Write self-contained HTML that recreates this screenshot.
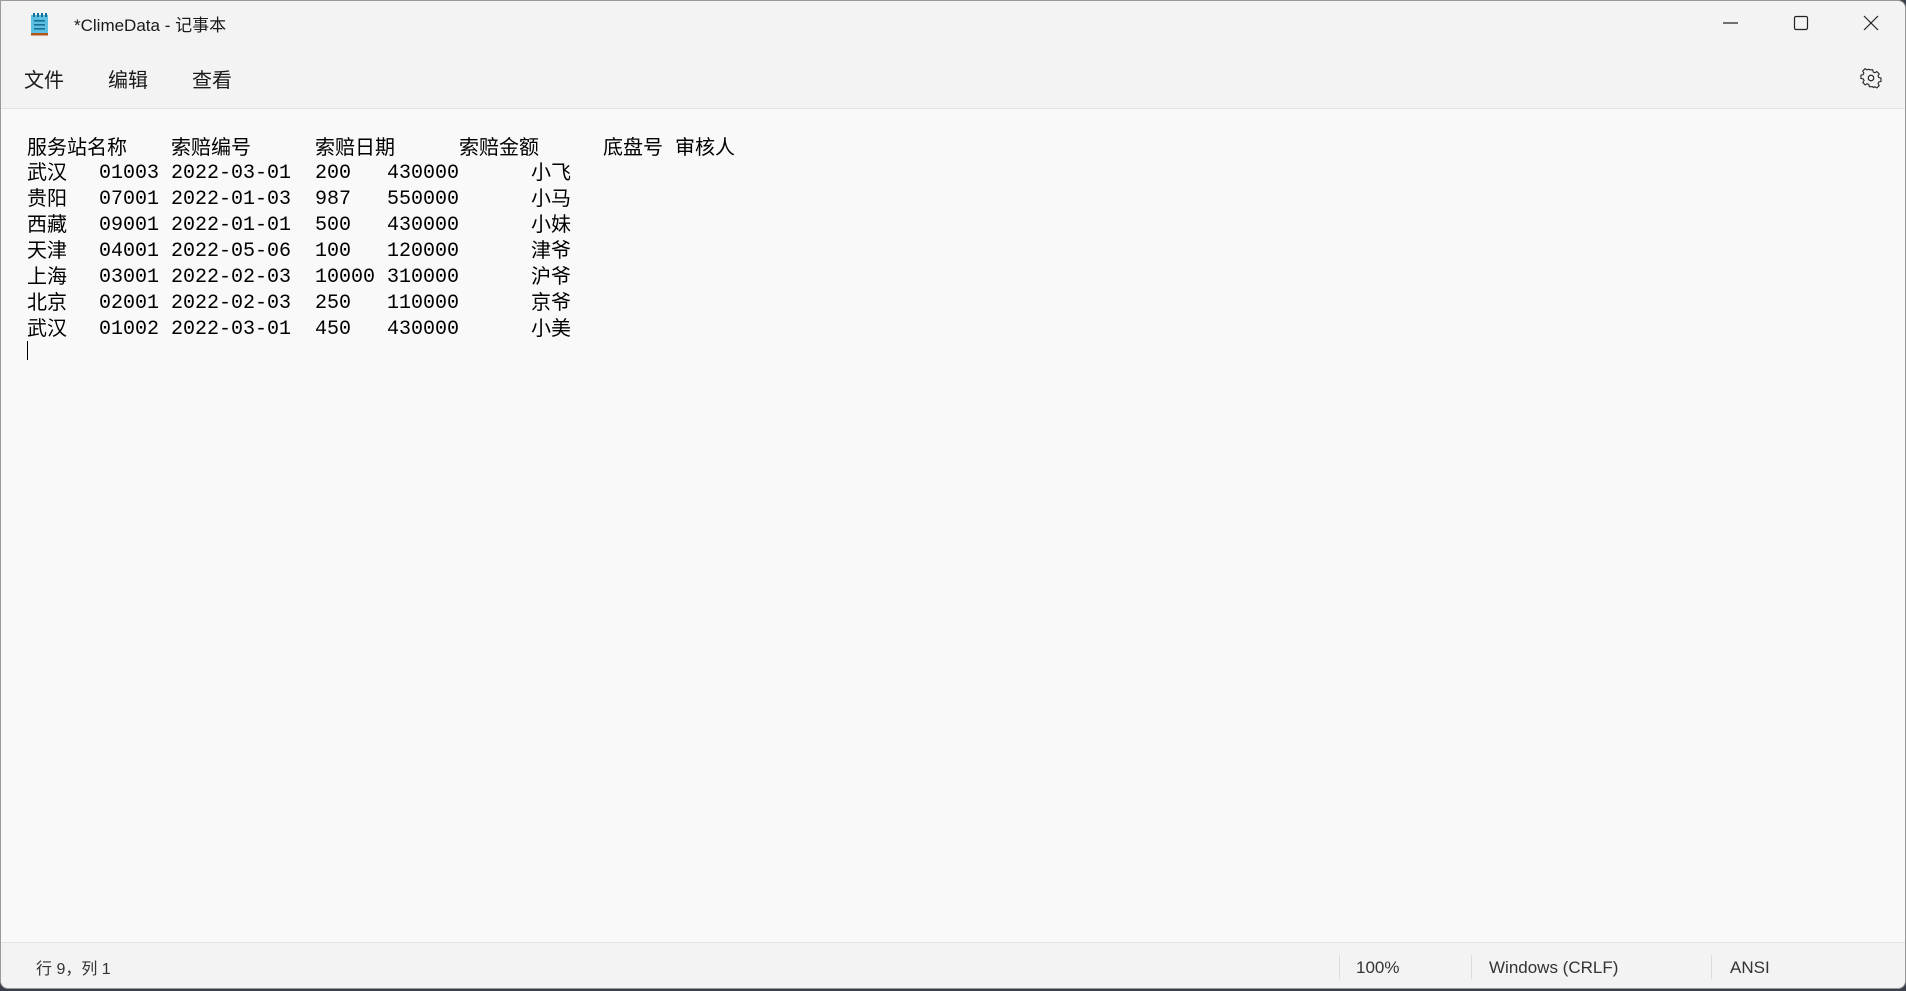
<!DOCTYPE html>
<html><head><meta charset="utf-8"><style>
*{margin:0;padding:0;box-sizing:border-box}
html,body{width:1906px;height:991px;overflow:hidden;background:#3a3f4a}
#win{position:absolute;left:0;top:0;width:1906px;height:989px;background:#f3f3f3;border:1px solid #9a9a9a;border-radius:0 8px 8px 8px;overflow:hidden;font-family:"Liberation Sans","Noto Sans CJK SC",sans-serif;color:#1a1a1a}
.t{position:absolute;white-space:nowrap}
#edit{position:absolute;left:0;top:107px;width:1906px;height:835px;background:#f9f9f9;border-top:1px solid #e3e3e3;border-bottom:1px solid #e3e3e3}
.c{position:absolute;font-size:20px;line-height:26px;white-space:nowrap;font-family:"Liberation Mono","Noto Sans CJK SC",monospace;color:#000}
.cj{font-family:"Noto Sans CJK SC",sans-serif}
.sep{position:absolute;top:954px;width:1px;height:24px;background:#dcdcdc}
.st{position:absolute;top:957px;font-size:17px;color:#333;white-space:nowrap}
</style></head><body><div id="win">
<svg style="position:absolute;left:28px;top:11px" width="22" height="24" viewBox="0 0 22 24">
<rect x="2" y="3" width="17" height="18" fill="#5bc0e4"/>
<rect x="4" y="1" width="2" height="4" fill="#1a6f95"/><rect x="8" y="1" width="2" height="4" fill="#1a6f95"/><rect x="12" y="1" width="2" height="4" fill="#1a6f95"/><rect x="16" y="1" width="2" height="4" fill="#1a6f95"/>
<rect x="5" y="8" width="11" height="1.6" fill="#1a6f95"/><rect x="5" y="12" width="11" height="1.6" fill="#1a6f95"/><rect x="5" y="16" width="11" height="1.6" fill="#1a6f95"/>
<rect x="2" y="21" width="17" height="2.5" fill="#b4561c"/></svg>
<div class="t" style="left:73px;top:10px;font-size:17px">*ClimeData - 记事本</div>
<svg style="position:absolute;left:1722px;top:14px" width="170" height="20" viewBox="0 0 170 20" fill="none" stroke="#222" stroke-width="1.2">
<line x1="0" y1="8" x2="15" y2="8"/><rect x="71.5" y="1.5" width="13" height="13" rx="1.5"/><line x1="141" y1="1" x2="155" y2="15"/><line x1="155" y1="1" x2="141" y2="15"/></svg>
<div class="t" style="left:23px;top:63px;font-size:20px">文件</div>
<div class="t" style="left:107px;top:63px;font-size:20px">编辑</div>
<div class="t" style="left:191px;top:63px;font-size:20px">查看</div>
<svg style="position:absolute;left:1859px;top:66px" width="22" height="22" viewBox="0 0 24 24" fill="none" stroke="#222" stroke-width="1.3">
<path d="M10 2h4l.6 2.6 2 .9 2.3-1.4 2.8 2.8-1.4 2.3.9 2 2.6.6v4l-2.6.6-.9 2 1.4 2.3-2.8 2.8-2.3-1.4-2 .9L14 22h-4l-.6-2.6-2-.9-2.3 1.4-2.8-2.8 1.4-2.3-.9-2L0 12.4v-4l2.6-.6.9-2L2.1 3.5 4.9.7l2.3 1.4 2-.9z" transform="translate(1 1.2) scale(.92)"/><circle cx="12" cy="12" r="3"/></svg>
<div id="edit"></div>
<div class="c cj" style="left:26px;top:132px">服务站名称</div>
<div class="c cj" style="left:170px;top:132px">索赔编号</div>
<div class="c cj" style="left:314px;top:132px">索赔日期</div>
<div class="c cj" style="left:458px;top:132px">索赔金额</div>
<div class="c cj" style="left:602px;top:132px">底盘号</div>
<div class="c cj" style="left:674px;top:132px">审核人</div>
<div class="c" style="left:26px;top:159px;width:1000px">
<div style="position:absolute;left:0;top:-2px" class="cj">武汉<br>贵阳<br>西藏<br>天津<br>上海<br>北京<br>武汉</div>
<div style="position:absolute;left:72px;top:1px">01003<br>07001<br>09001<br>04001<br>03001<br>02001<br>01002</div>
<div style="position:absolute;left:144px;top:1px">2022-03-01<br>2022-01-03<br>2022-01-01<br>2022-05-06<br>2022-02-03<br>2022-02-03<br>2022-03-01</div>
<div style="position:absolute;left:288px;top:1px">200<br>987<br>500<br>100<br>10000<br>250<br>450</div>
<div style="position:absolute;left:360px;top:1px">430000<br>550000<br>430000<br>120000<br>310000<br>110000<br>430000</div>
<div style="position:absolute;left:504px;top:-2px" class="cj">小飞<br>小马<br>小妹<br>津爷<br>沪爷<br>京爷<br>小美</div>
</div>
<div style="position:absolute;left:26px;top:340px;width:1px;height:19px;background:#000"></div>
<div class="st" style="left:35px;top:954px;font-size:16px">行 9，列 1</div>
<div class="sep" style="left:1338px"></div><div class="st" style="left:1355px">100%</div>
<div class="sep" style="left:1470px"></div><div class="st" style="left:1488px">Windows (CRLF)</div>
<div class="sep" style="left:1710px"></div><div class="st" style="left:1729px">ANSI</div>
</div></body></html>
